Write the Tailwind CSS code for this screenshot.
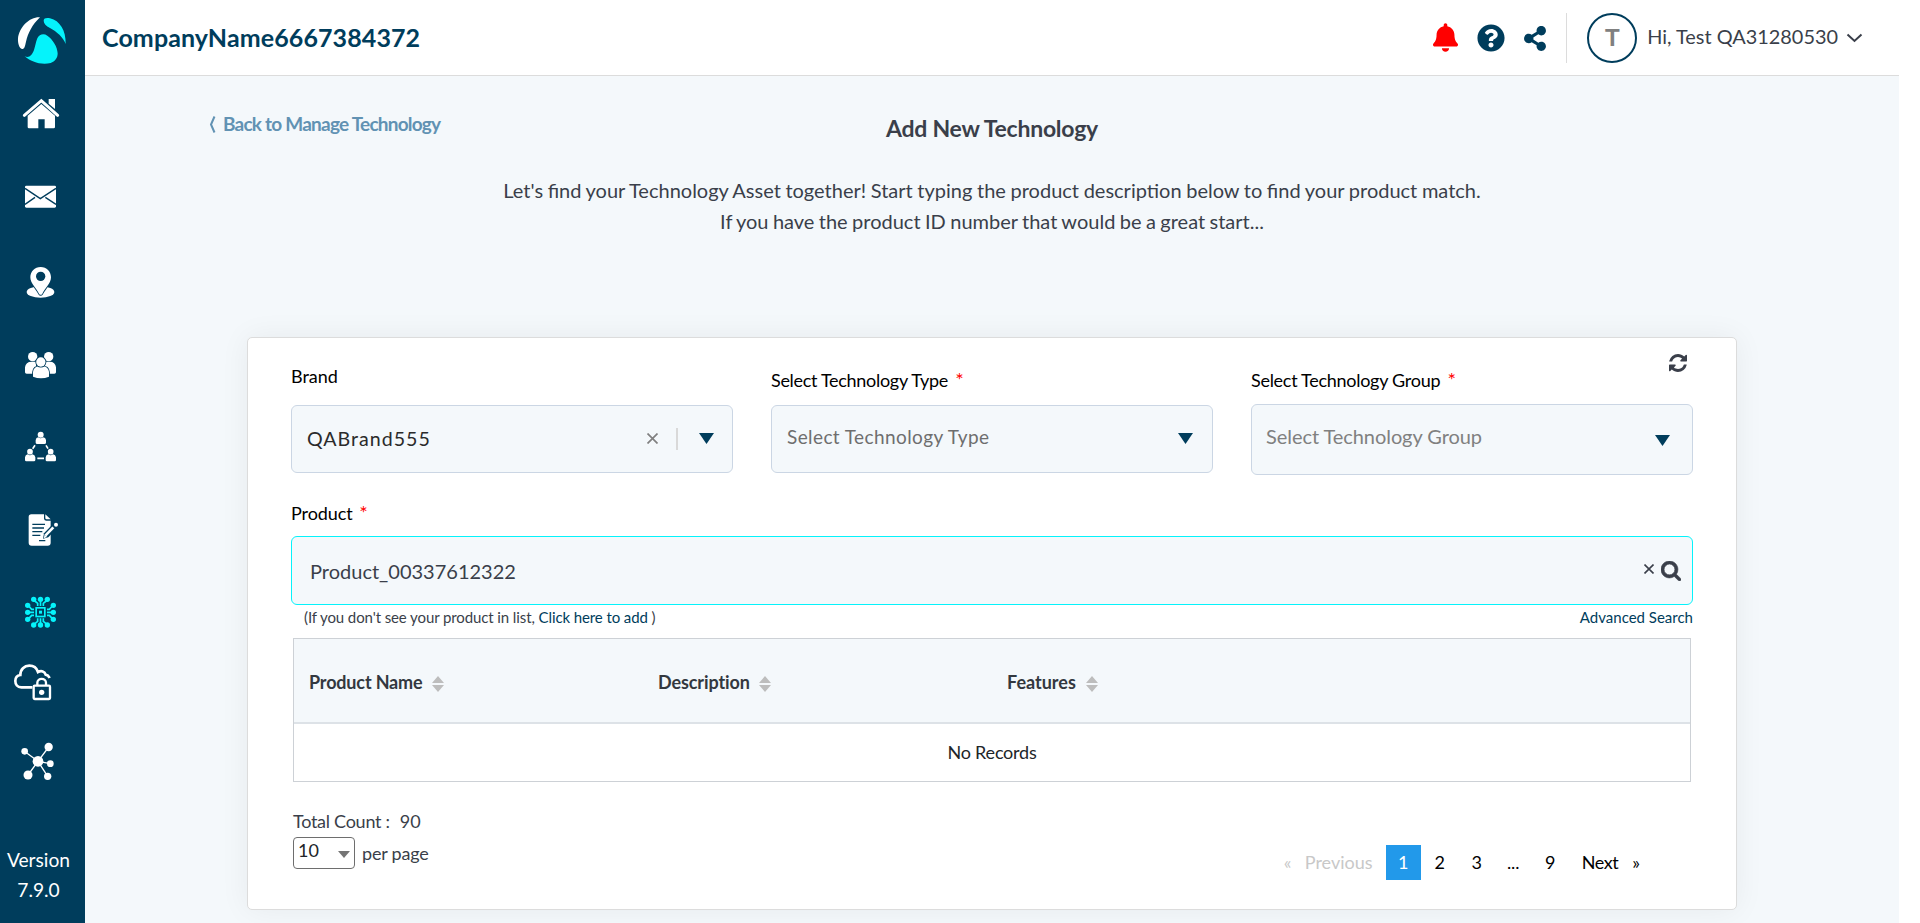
<!DOCTYPE html>
<html lang="en">
<head>
<meta charset="utf-8">
<title>Add New Technology</title>
<script src="https://cdn.jsdelivr.net/npm/@tailwindcss/browser@4"></script>
</head>
<body class="h-[923px] overflow-hidden bg-white font-['Lato',sans-serif] text-[#3a3f4a]">
<div class="flex h-full w-full">

  <!-- Sidebar -->
  <nav class="flex w-[85px] shrink-0 flex-col bg-[#003d5c] text-white">
    <svg class="h-[82px] w-[85px]" viewBox="0 0 255 246"><path fill="#fff" d="M120 52C90 50 58 80 54 115C53 130 58 146 66 147C74 147 75 138 78 125C84 100 96 75 120 52"/><path fill="#05f3fb" d="M131 62C131 54 140 53 150 55C180 62 198 92 197 132C190 112 170 95 150 84C138 78 131 70 131 62M112 115C118 102 132 100 142 107C158 118 172 140 173 160C173 175 165 184 152 189C125 196 92 186 74 169C88 175 96 165 102 150C106 138 107 128 112 115"/></svg>
    <svg class="h-[73px] w-[85px]" viewBox="0 246 255 219"><g fill="#fff"><path d="M124 312L165 347V381Q165 385 161 385H134V358H115V385H87Q83 385 83 381V347Z"/><path d="M146 297H165V327L146 311Z"/></g><path d="M73 346L124 302L173 346" fill="none" stroke="#fff" stroke-width="9" stroke-linecap="round"/></svg>
    <svg class="h-[82px] w-[85px]" viewBox="0 465 255 246"><rect x="75" y="557" width="93" height="66" rx="4" fill="#fff"/><path d="M75 565L121 596L168 565M75 613L105 592M168 613L136 592" fill="none" stroke="#003d5c" stroke-width="4"/></svg>
    <svg class="h-[88px] w-[85px]" viewBox="0 -9 255 264"><ellipse cx="121.500" cy="156" rx="41.500" ry="17" fill="#fff"/><path d="M122 81C104 81 91 94 91 112C91 130 110 146 117 161Q122 168 127 161C134 146 153 130 153 112C153 94 140 81 122 81Z" fill="#fff" stroke="#003d5c" stroke-width="5" paint-order="stroke"/><circle cx="122" cy="109" r="14" fill="#003d5c"/></svg>
    <svg class="h-[80px] w-[85px]" viewBox="0 255 255 240"><g fill="#fff"><circle cx="98" cy="350" r="14"/><circle cx="146" cy="350" r="14"/><path d="M75 399V382Q77 365 95 365H108V401H80Q75 401 75 397ZM168 399V382Q166 365 149 365H135V401H163Q168 401 168 397Z"/><g stroke="#003d5c" stroke-width="5" paint-order="stroke"><path d="M99 410V396Q101 379 119 379H127Q145 379 147 396V410Q123 420 99 410Z"/><circle cx="122.500" cy="366" r="14"/></g></g></svg>
    <svg class="h-[83px] w-[85px]" viewBox="0 495 255 249"><g fill="#fff"><circle cx="122" cy="584" r="9"/><path d="M107 608V600Q108 593 115 592Q122 598 129 592Q137 593 138 600V608Q138 612 133 612H112Q107 612 107 608Z"/><circle cx="90" cy="635" r="8.500"/><path d="M75 660V652Q76 644 83 643Q90 649 97 643Q105 644 106 652V660Q106 664 102 664H79Q75 664 75 660Z"/><circle cx="152" cy="635" r="8.500"/><path d="M137 660V652Q138 644 145 643Q152 649 159 643Q167 644 168 652V660Q168 664 164 664H141Q137 664 137 660Z"/></g><path d="M105 616L98 626M138 616L144 626M112 655H132" stroke="#fff" stroke-width="5"/></svg>
    <svg class="h-[83px] w-[85px]" viewBox="0 744 255 249"><path d="M94 823H132V836Q133 842 139 842H152V908Q152 917 143 917H95Q86 917 86 908V831Q86 823 94 823Z" fill="#fff"/><path d="M136 823L152 838H140Q136 838 136 834Z" fill="#fff"/><path d="M97 853H135M97 864H132M97 875H127M97 886H121M117 902H136" stroke="#003d5c" stroke-width="4"/><path d="M129 896L132 880L153 858L166 870L145 892Z" fill="#003d5c"/><path d="M136 887L160 862" stroke="#fff" stroke-width="8"/><path d="M131 895L134 884L141 891Z" fill="#fff"/><circle cx="168" cy="854" r="6" fill="#fff"/></svg>
    <svg class="h-[75px] w-[85px]" viewBox="0 33 255 225"><g fill="none" stroke="#05f3fb" stroke-width="5"><rect x="108.500" y="143.500" width="26" height="26"/><rect x="118.500" y="153.500" width="6" height="6" stroke-width="3"/><path stroke-width="5" d="M121.500 122V138M121.500 175V191M86 157H102M141 157H157M101 120L113 130V138M142 120L130 130V138M101 194L113 184V175M142 194L130 184V175M86 138L95 148H102M157 138L148 148H141M86 176L95 166H102M157 176L148 166H141"/></g><g fill="#05f3fb"><circle cx="121.500" cy="118" r="8"/><circle cx="121.500" cy="195" r="8"/><circle cx="83" cy="157" r="8"/><circle cx="160" cy="157" r="8"/><circle cx="101" cy="118" r="8"/><circle cx="142" cy="118" r="8"/><circle cx="101" cy="195" r="8"/><circle cx="142" cy="195" r="8"/><circle cx="83" cy="136" r="8"/><circle cx="160" cy="136" r="8"/><circle cx="83" cy="178" r="8"/><circle cx="160" cy="178" r="8"/></g></svg>
    <svg class="h-[75px] w-[85px]" viewBox="0 258 255 225"><g fill="none" stroke="#fff" stroke-width="8"><path d="M97 382H64C52 382 46 373 46 363C46 352 53 346 61 345C61 328 73 317 88 317C101 317 110 324 114 336C124 331 134 334 137 344C143 345 146 348 149 354"/><rect x="101" y="377" width="49" height="40" rx="3" stroke-width="7"/><path d="M112 375V368C112 353 138 353 138 368V375" stroke-width="7"/></g><circle cx="125" cy="397" r="8" fill="#fff"/></svg>
    <svg class="h-[79px] w-[85px]" viewBox="0 483 255 237"><path d="M114 604L73 574M114 604L146 561M114 604L151 611M114 604L84 645M114 604L143 649" stroke="#fff" stroke-width="4"/><g fill="#fff"><circle cx="114" cy="604" r="16"/><circle cx="74" cy="574" r="10"/><circle cx="146" cy="561" r="12.500"/><circle cx="151" cy="611" r="10"/><circle cx="84" cy="645" r="13.500"/><circle cx="143" cy="649" r="11"/></g></svg>
    <div class="mt-[45px] w-[77px] text-center text-[19.200px] leading-[30px]"><span>Version</span><br><span>7.9.0</span></div>
  </nav>

  <div class="flex w-[1814px] shrink-0 flex-col bg-[#f4f8fb]">
    <!-- Header -->
    <header class="flex h-[76px] shrink-0 items-center border-b border-[#dcdcdc] bg-white pl-[17px]">
      <h1 class="text-[25px] font-bold tracking-[0.100px] text-[#003d5c]">CompanyName6667384372</h1>
      <div class="ml-auto flex items-center">
        <svg class="h-[29px] w-[25px]" viewBox="0 0 448 512" fill="#f00"><path d="M224 512c35.320 0 63.970-28.650 63.970-64H160.030c0 35.350 28.650 64 63.970 64zm215.390-149.710c-19.320-20.760-55.470-51.990-55.470-154.290 0-77.700-54.480-139.900-127.940-155.160V32c0-17.670-14.320-32-31.980-32s-31.980 14.330-31.980 32v20.840C118.560 68.100 64.080 130.300 64.080 208c0 102.300-36.150 133.530-55.470 154.290-6 6.450-8.660 14.160-8.610 21.710.110 16.400 12.980 32 32.100 32h383.800c19.120 0 32-15.600 32.100-32 .050-7.550-2.610-15.270-8.610-21.710z"/></svg>
        <svg class="ml-[19px] size-[28px]" viewBox="0 0 512 512" fill="#003d5c"><path d="M504 256c0 136.997-111.043 248-248 248S8 392.997 8 256C8 119.083 119.043 8 256 8s248 111.083 248 248zM262.655 90c-54.497 0-89.255 22.957-116.549 63.758-3.536 5.286-2.353 12.415 2.715 16.258l34.699 26.310c5.205 3.947 12.621 3.008 16.665-2.122 17.864-22.658 30.113-35.797 57.303-35.797 20.429 0 45.698 13.148 45.698 32.958 0 14.976-12.363 22.667-32.534 33.976C247.128 238.528 216 254.941 216 296v4c0 6.627 5.373 12 12 12h56c6.627 0 12-5.373 12-12v-1.333c0-28.462 83.186-29.647 83.186-106.667 0-58.002-60.165-102-116.531-102zM256 338c-25.365 0-46 20.635-46 46 0 25.364 20.635 46 46 46s46-20.636 46-46c0-25.365-20.635-46-46-46z"/></svg>
        <svg class="mt-[2px] ml-[19px] h-[25px] w-[22px]" viewBox="0 0 448 512" fill="#003d5c"><path d="M352 320c-22.608 0-43.387 7.819-59.790 20.895l-102.486-64.054a96.551 96.551 0 0 0 0-41.683l102.486-64.054C308.613 184.181 329.392 192 352 192c53.019 0 96-42.981 96-96S405.019 0 352 0s-96 42.981-96 96c0 7.158.790 14.130 2.276 20.841L155.790 180.895C139.387 167.819 118.608 160 96 160c-53.019 0-96 42.981-96 96s42.981 96 96 96c22.608 0 43.387-7.819 59.790-20.895l102.486 64.054A96.301 96.301 0 0 0 256 416c0 53.019 42.981 96 96 96s96-42.981 96-96-42.981-96-96-96z"/></svg>
        <div class="ml-[20px] h-[50px] w-px bg-[#dcdcdc]"></div>
        <div class="ml-[20px] flex size-[50px] items-center justify-center rounded-full border-2 border-[#003d5c] font-['Liberation_Sans',sans-serif] text-[24px] font-bold text-[#808080]">T</div>
        <div class="mb-[2px] ml-[10px] text-[19.900px]">Hi, Test QA31280530</div>
        <svg class="mr-[36px] ml-[8px] h-[10px] w-[17px]" viewBox="0 0 17 10" fill="none" stroke="#3a3f4a" stroke-width="2"><path d="M1.500 1.500L8.500 8L15.500 1.500"/></svg>
      </div>
    </header>

    <!-- Page heading -->
    <div class="mt-[33px] grid grid-cols-3">
      <div class="flex h-[30px] items-center pl-[124px] text-[19px] font-bold tracking-[-0.770px] text-[#6192b3]"><svg class="mr-[7px] h-[17px] w-[7px]" viewBox="0 0 7 17" fill="none" stroke="#6192b3" stroke-width="2"><path d="M5.500 .5L2 8.500L5.500 16.500"/></svg><span>Back to Manage Technology</span></div>
      <h2 class="mt-[4px] text-center text-[23px] leading-[30px] font-bold tracking-[-0.250px]">Add New Technology</h2>
    </div>
    <p class="mt-[32px] text-center text-[20px] leading-[30.500px]"><span class="[word-spacing:-0.500px]">Let's find your Technology Asset together! Start typing the product description below to find your product match.</span><br><span class="[word-spacing:-0.700px]">If you have the product ID number that would be a great start...</span></p>

    <!-- Search card -->
    <main class="mt-[101px] ml-[162px] flex h-[573px] w-[1490px] shrink-0 flex-col rounded-[5px] border border-[#dcdcdc] bg-white px-[43px] shadow-[0_0_30px_rgba(0,0,0,0.06)]">
      <div class="mt-[16px] flex h-[18px] justify-end pr-[6px]">
        <svg class="size-[18px]" viewBox="0 128 1536 1536" fill="#3a3f4a"><path d="M1511 1056q0 5-1 7-64 268-268 434.500t-478 166.500q-146 0-282.500-55t-243.500-157l-129 129q-19 19-45 19t-45-19-19-45v-448q0-26 19-45t45-19h448q26 0 45 19t19 45-19 45l-137 137q71 66 161 102t187 36q134 0 250-65t186-179q11-17 53-117 8-23 30-23h192q13 0 22.500 9.500t9.500 22.500zm25-800v448q0 26-19 45t-45 19h-448q-26 0-45-19t-19-45 19-45l138-138q-148-137-349-137-134 0-250 65t-186 179q-11 17-53 117-8 23-30 23h-199q-13 0-22.500-9.500t-9.500-22.500v-7q65-268 270-434.500t480-166.500q146 0 284 55.500t245 156.500l130-129q19-19 45-19t45 19 19 45z"/></svg>
      </div>
      <div class="flex h-[104px] justify-between text-[18px] text-black">
        <div class="w-[442px]">
          <div class="-mt-[6px] h-[39px] leading-[20px]">Brand</div>
          <div class="flex h-[68px] items-center rounded-[6px] border border-[#cbd6e4] bg-[#f4f8fb] pr-[18px] pl-[15px]">
            <span class="mb-[1px] text-[19.600px] tracking-[1px] text-[#2b2b2b]">QABrand555</span>
            <svg class="mb-[1px] ml-auto size-[11px]" viewBox="0 0 11 11" stroke="#808080" stroke-width="1.700"><path d="M.5 .5L10.500 10.500M10.500 .5L.5 10.500"/></svg>
            <div class="ml-[18px] h-[22px] w-[2px] bg-[#d9d9d9]"></div>
            <svg class="mb-[2px] ml-[21px] h-[11px] w-[15px]" viewBox="0 0 15 11" fill="#003d5c"><path d="M0 0H15L7.500 11Z"/></svg>
          </div>
        </div>
        <div class="w-[442px]">
          <div class="-mt-[3px] h-[36px] leading-[20px] tracking-[-0.300px]">Select Technology Type <span class="ml-[3px] text-[20px] text-[#f00]">*</span></div>
          <div class="flex h-[68px] items-center rounded-[6px] border border-[#cbd6e4] bg-[#f4f8fb] pr-[19px] pl-[15px]">
            <span class="mb-[4px] text-[19px] tracking-[0.400px] text-[#6e6e6e]">Select Technology Type</span>
            <svg class="mb-[2px] ml-auto h-[11px] w-[15px]" viewBox="0 0 15 11" fill="#003d5c"><path d="M0 0H15L7.500 11Z"/></svg>
          </div>
        </div>
        <div class="w-[442px]">
          <div class="-mt-[3px] h-[35px] leading-[20px] tracking-[-0.280px]">Select Technology Group <span class="ml-[3px] text-[20px] text-[#f00]">*</span></div>
          <div class="flex h-[71px] items-center rounded-[6px] border border-[#cbd6e4] bg-[#f4f8fb] pr-[22px] pl-[14px]">
            <span class="mb-[8px] text-[20px] tracking-[-0.060px] text-[#808080]">Select Technology Group</span>
            <svg class="mt-[1px] ml-auto h-[11px] w-[15px]" viewBox="0 0 15 11" fill="#003d5c"><path d="M0 0H15L7.500 11Z"/></svg>
          </div>
        </div>
      </div>
      <div class="mt-[26px] h-[34px] text-[18px] leading-[20px] tracking-[-0.080px] text-black">Product <span class="ml-[2px] text-[20px] text-[#f00]">*</span></div>
      <div class="flex h-[69px] w-[1402px] items-center rounded-[6px] border border-[#05f3fb] bg-[#f4f8fb] pr-[11px] pl-[18px] text-[20px]">
        <span>Product_00337612322</span>
        <svg class="mb-[3px] ml-auto size-[10px]" viewBox="0 0 10 10" stroke="#3a3f4a" stroke-width="1.600"><path d="M.5 .5L9.500 9.500M9.500 .5L.5 9.500"/></svg>
        <svg class="ml-[7px] size-[20px]" viewBox="0 128 1664 1664" fill="#3a3f4a" stroke="#3a3f4a" stroke-width="50"><path d="M1152 832q0-185-131.500-316.500t-316.500-131.500-316.500 131.500-131.500 316.500 131.500 316.500 316.500 131.500 316.500-131.500 131.500-316.500zm512 832q0 52-38 90t-90 38q-54 0-90-38l-343-342q-179 124-399 124-143 0-273.500-55.500t-225-150-150-225-55.500-273.500 55.500-273.500 150-225 225-150 273.500-55.500 273.500 55.500 225 150 150 225 55.500 273.500q0 220-124 399l343 343q37 37 37 90z"/></svg>
      </div>
      <div class="mt-[2px] flex h-[31px] w-[1402px] justify-between pl-[13px] text-[15px] leading-[20px]">
        <div class="tracking-[-0.100px]">(If you don't see your product in list, <span class="text-[#003d5c]">Click here to add</span> )</div>
        <span class="text-[#003d5c]">Advanced Search</span>
      </div>
      <div class="ml-[2px] flex h-[144px] w-[1398px] flex-col border border-[#cdd1d6] text-[18px]">
        <div class="flex h-[85px] items-center border-b-2 border-[#dde2e7] bg-[#f4f8fb] pt-[4px] font-bold text-[#33383f]">
          <div class="flex w-[349px] items-center pl-[15px] tracking-[-0.160px]"><span>Product Name</span><svg class="mt-[3px] ml-[10px] h-[16px] w-[12px]" viewBox="0 0 12 16" fill="#bdbdbd"><path d="M6 0L12 7H0ZM0 9H12L6 16Z"/></svg></div>
          <div class="flex w-[349px] items-center pl-[15px] tracking-[-0.110px]"><span>Description</span><svg class="mt-[3px] ml-[9px] h-[16px] w-[12px]" viewBox="0 0 12 16" fill="#bdbdbd"><path d="M6 0L12 7H0ZM0 9H12L6 16Z"/></svg></div>
          <div class="flex flex-1 items-center pl-[15px]"><span>Features</span><svg class="mt-[3px] ml-[10px] h-[16px] w-[12px]" viewBox="0 0 12 16" fill="#bdbdbd"><path d="M6 0L12 7H0ZM0 9H12L6 16Z"/></svg></div>
        </div>
        <div class="flex flex-1 items-center justify-center tracking-[-0.210px] text-[#212529]">No Records</div>
      </div>
      <div class="mt-[29px] ml-[2px] text-[18px] leading-[20px]"><span class="tracking-[-0.270px]">Total Count :</span><span class="ml-[10px]">90</span></div>
      <div class="ml-[2px] flex text-[18px]">
        <div class="mt-[6px] flex h-[32px] w-[62px] rounded-[4px] border border-[#6e6e6e] pl-[4px] leading-[25px] text-[#212529]"><span>10</span><svg class="mt-[13px] ml-[19px] h-[7px] w-[12px]" viewBox="0 0 12 7" fill="#757575"><path d="M0 0H12L6 7Z"/></svg></div>
        <div class="mt-[12px] ml-[7px] leading-[20px] tracking-[-0.210px]">per page</div>
        <div class="mt-[14px] ml-auto flex h-[35px] items-center pr-[53px] text-black">
          <span class="w-[21px] text-[#c8c8c8]">«</span>
          <span class="w-[81px] text-[#c8c8c8]">Previous</span>
          <div class="flex h-[35px] w-[35px] items-center justify-center bg-[#2299ea] text-white">1</div>
          <div class="w-[38px] text-center">2</div>
          <div class="w-[36px] text-center">3</div>
          <div class="w-[37px] text-center">...</div>
          <div class="w-[37px] text-center">9</div>
          <span class="ml-[13px] tracking-[-0.440px]">Next</span>
          <span class="ml-[14px]">»</span>
        </div>
      </div>
    </main>
  </div>
</div>
</body>
</html>
